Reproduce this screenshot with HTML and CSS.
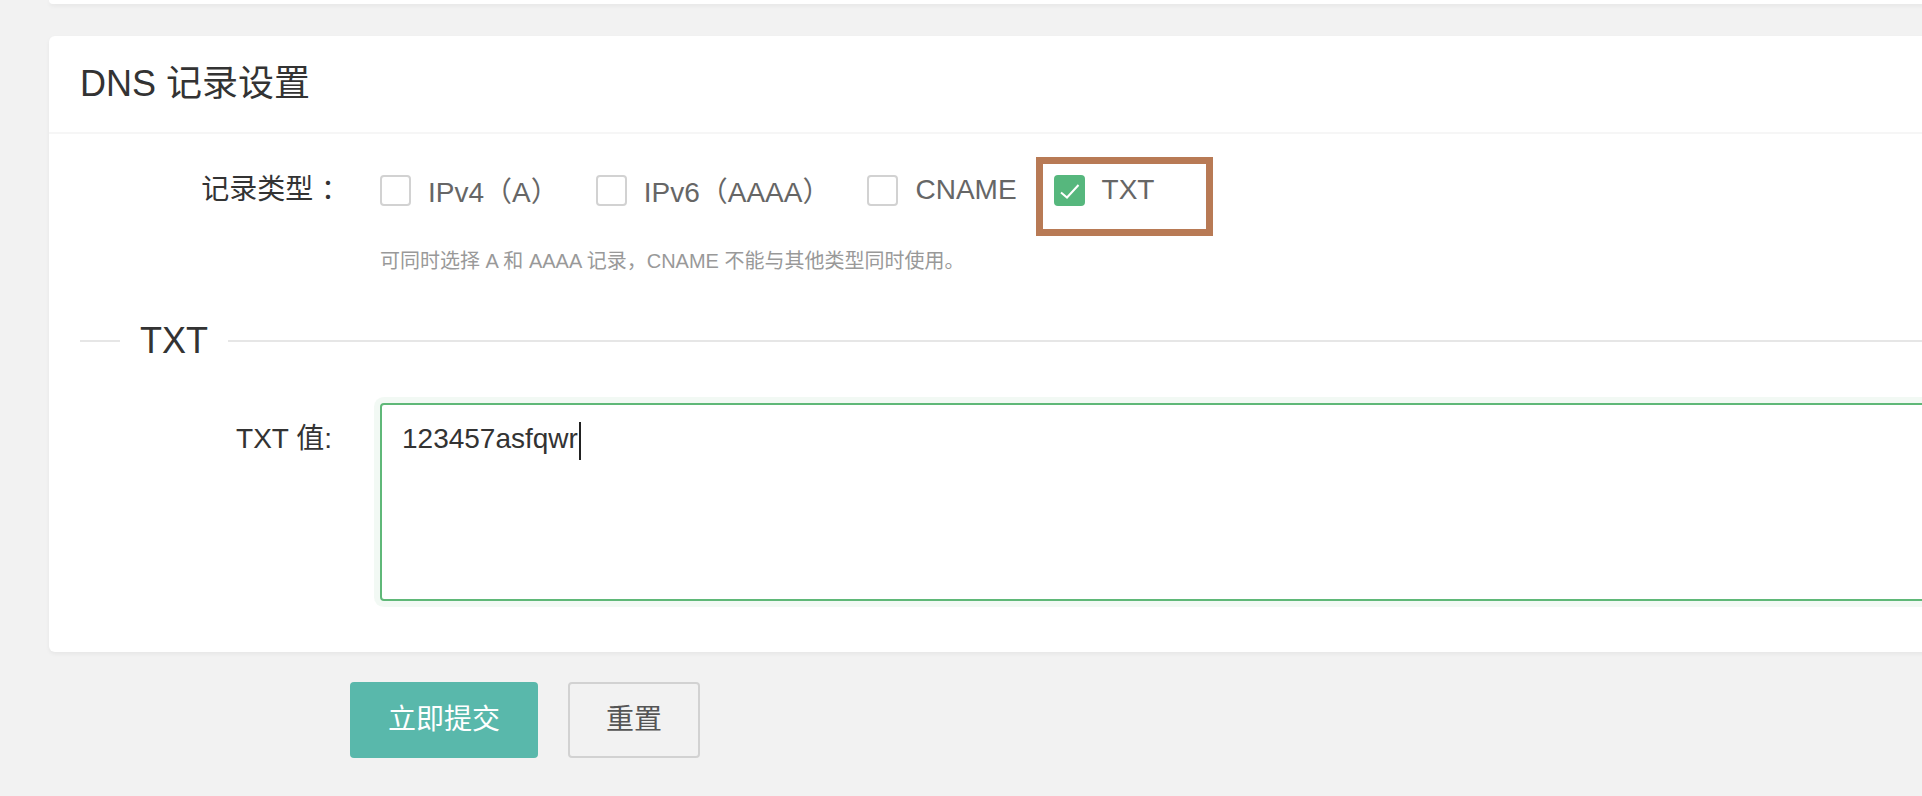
FILE: index.html
```html
<!DOCTYPE html>
<html lang="zh-CN">
  <head>
    <meta charset="UTF-8" />
    <meta name="viewport" content="width=device-width, initial-scale=1.0" />
    <title>DNS 记录设置</title>
    <link rel="stylesheet" href="styles.css">
  </head>
  <body>
    <div class="page">
      <!-- previous card, mostly scrolled out of view -->
      <div class="card card-prev"></div>

      <div class="card">
        <div class="card-header">DNS 记录设置</div>
        <div class="card-body">
          <div class="form-item">
            <label class="form-label form-label-type">记录类型 ：</label>
            <div class="input-block">
              <div class="check-group">
                <span class="check"><i class="check-box"></i>IPv4（A）</span>
                <span class="check"><i class="check-box"></i>IPv6（AAAA）</span>
                <span class="check"><i class="check-box"></i>CNAME</span>
                <span class="check checked">
                  <i class="check-box">
                    <svg width="31" height="31" viewBox="0 0 31 31">
                      <polyline points="7,17.5 13,22.5 24.5,10" fill="none" stroke="#fff" stroke-width="2" />
                    </svg>
                  </i>TXT
                  <span class="mark"></span>
                </span>
              </div>
              <div class="form-aux">可同时选择 A 和 AAAA 记录，CNAME 不能与其他类型同时使用。</div>
            </div>
          </div>

          <fieldset class="field-title">
            <legend>TXT</legend>
            <div class="form-item form-item-text">
              <label class="form-label form-label-short">TXT 值:</label>
              <div class="input-block">
                <div class="textarea">123457asfqwr<span class="caret"></span></div>
              </div>
            </div>
          </fieldset>
        </div>
      </div>

      <div class="actions">
        <button type="submit" class="btn">立即提交</button>
        <button type="reset" class="btn btn-primary">重置</button>
      </div>
    </div>
  </body>
</html>
```

FILE: styles.css
```css
* {
  margin: 0;
  padding: 0;
  box-sizing: border-box;
}

html,
body {
  overflow: hidden;
}

body {
  font-family: "Liberation Sans", "Noto Sans CJK SC", sans-serif;
  background-color: #f2f2f2;
  color: #333;
}

.page {
  padding-left: 49px;
}

/* Cards */
.card {
  background-color: #fff;
  border-radius: 6px;
  box-shadow: 0 2px 4px rgba(0, 0, 0, 0.05);
  margin-top: 32px;
  margin-right: -60px;
}

.card-prev {
  height: 4px;
  margin-top: 0;
  border-radius: 0 0 6px 6px;
}

.card-header {
  height: 98px;
  line-height: 96px;
  padding: 0 31px;
  font-size: 36px;
  color: #333;
  border-bottom: 2px solid #f6f6f6;
}

.card-body {
  padding: 36px 31px 51px;
}

/* Form rows */
.form-item {
  display: flex;
  align-items: flex-start;
}

.form-label {
  flex: 0 0 300px;
  padding-right: 37px;
  text-align: right;
  font-size: 28px;
  line-height: 40px;
  color: #333;
}

.form-label-type {
  padding-right: 31px;
}

.form-label-short {
  padding-top: 16px;
  padding-right: 48px;
}

.input-block {
  flex: 1;
  min-width: 0;
}

/* Checkboxes */
.check-group {
  display: flex;
  align-items: center;
  gap: 37px;
  height: 40px;
}

.check {
  position: relative;
  display: flex;
  align-items: center;
  height: 40px;
  font-size: 28px;
  color: #666;
  cursor: pointer;
}

.check-box {
  display: block;
  width: 31px;
  height: 31px;
  margin-right: 17px;
  border: 2px solid #d2d2d2;
  border-radius: 4px;
  background-color: #fff;
}

.check.checked .check-box {
  border: none;
  background-color: #56b77d;
}

.check-box svg {
  display: block;
}

/* annotation frame around the selected type */
.mark {
  position: absolute;
  left: -18px;
  top: -13px;
  width: 177px;
  height: 79px;
  border: 7px solid #b87a55;
  pointer-events: none;
}

.form-aux {
  margin-top: 36px;
  font-size: 20px;
  line-height: 30px;
  color: #999;
}

/* Section title */
.field-title {
  margin-top: 41px;
  border: none;
  border-top: 2px solid #e6e6e6;
  min-width: 0;
}

.field-title legend {
  margin-left: 40px;
  padding: 0 20px;
  font-size: 36px;
  line-height: 48px;
  color: #333;
}

.form-item-text {
  margin-top: 38px;
}

.textarea {
  height: 198px;
  padding: 14px 20px;
  font-size: 28px;
  line-height: 40px;
  color: #333;
  border: 2px solid #5fb878;
  border-radius: 4px;
  box-shadow: 0 0 0 6px rgba(95, 184, 120, 0.08);
  background-color: #fff;
}

.caret {
  display: inline-block;
  width: 2px;
  height: 38px;
  margin-left: 1px;
  vertical-align: middle;
  background-color: #222;
}

/* Buttons */
.actions {
  display: flex;
  gap: 30px;
  padding-left: 301px;
  margin-top: 30px;
}

.btn {
  height: 76px;
  line-height: 72px;
  padding: 0 36px;
  font-family: inherit;
  font-size: 28px;
  color: #fff;
  background-color: #59b8ab;
  border: 2px solid transparent;
  border-radius: 4px;
  cursor: pointer;
}

.btn-primary {
  color: #555;
  background-color: transparent;
  border-color: #d2d2d2;
}
```
